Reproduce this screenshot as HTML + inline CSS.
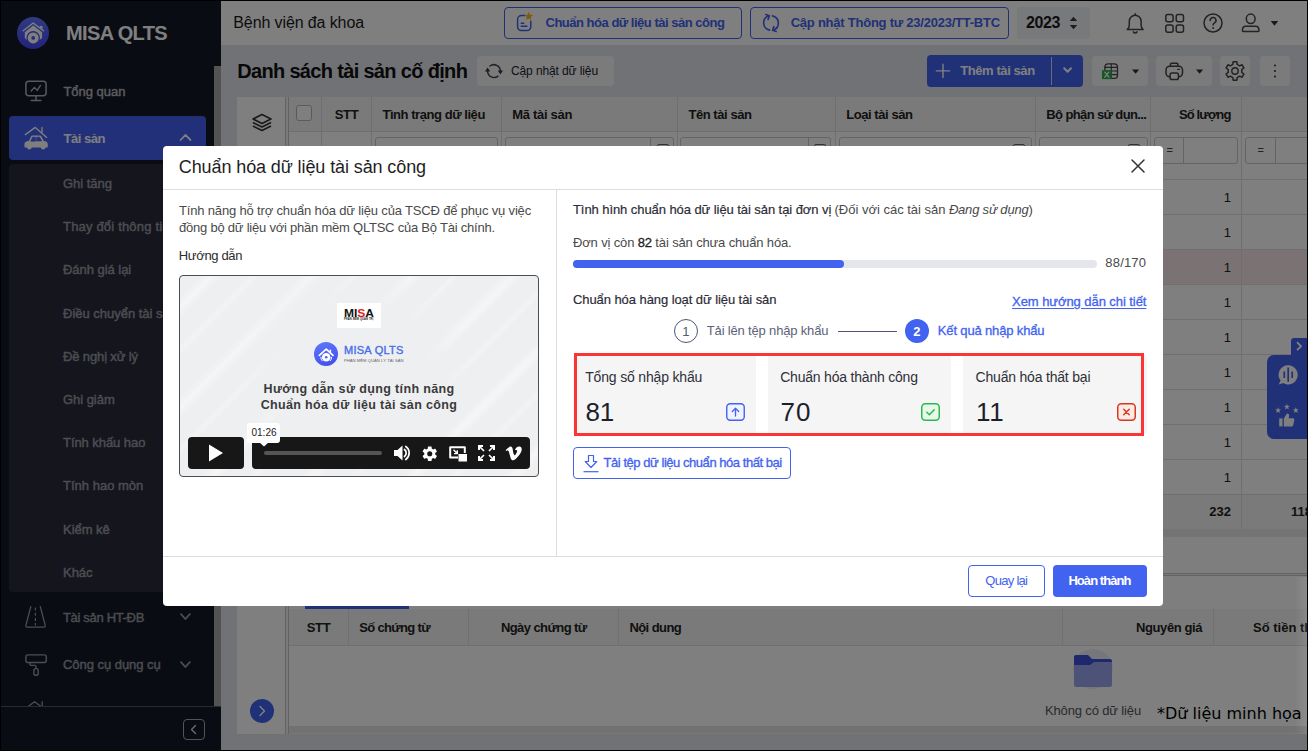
<!DOCTYPE html>
<html lang="vi"><head><meta charset="utf-8"><title>MISA QLTS</title>
<style>
html,body{margin:0;padding:0}
body{width:1308px;height:751px;background:#000;position:relative;overflow:hidden;font-family:"Liberation Sans",sans-serif;font-size:13px}
.r{position:absolute;box-sizing:border-box}
.t{position:absolute;white-space:nowrap}
#clip{position:absolute;left:1px;top:1px;width:1306px;height:749px;overflow:hidden}
#clip>.in{position:absolute;left:-1px;top:-1px;width:1308px;height:751px}
</style></head><body><div id="clip"><div class="in">
<div class="r" style="left:221px;top:1px;width:1086px;height:749px;background:#e2e4ea"></div>
<div class="r" style="left:221px;top:1px;width:1086px;height:44px;background:#ffffff"></div>
<div class="t" style="letter-spacing:-0.109px;left:233.30px;top:12px;font-size:16px;line-height:21px;color:#1a1a1a">Bệnh viện đa khoa</div>
<div class="r" style="left:504px;top:7px;width:238px;height:32px;border:1px solid #4262f0;border-radius:4px"></div>
<div class="t" style="letter-spacing:-0.490px;left:545.50px;top:13px;font-size:13px;line-height:19px;font-weight:700;color:#4262f0">Chuẩn hóa dữ liệu tài sản công</div>
<div class="r" style="left:750px;top:7px;width:259px;height:32px;border:1px solid #4262f0;border-radius:4px"></div>
<div class="t" style="letter-spacing:-0.235px;left:790.70px;top:13px;font-size:13px;line-height:19px;font-weight:700;color:#4262f0">Cập nhật Thông tư 23/2023/TT-BTC</div>
<div class="r" style="left:1017px;top:7px;width:73px;height:32px;background:#f1f2f4;border-radius:4px"></div>
<div class="t" style="letter-spacing:-0.398px;left:1026.00px;top:12px;font-size:16px;line-height:21px;font-weight:700;color:#1a1a1a">2023</div>
<div class="t" style="letter-spacing:-0.669px;left:237.20px;top:58px;font-size:20px;line-height:26px;font-weight:700;color:#111">Danh sách tài sản cố định</div>
<div class="r" style="left:477px;top:56px;width:137px;height:30px;background:#f6f7f9;border-radius:4px"></div>
<div class="t" style="letter-spacing:-0.110px;left:511.00px;top:62px;font-size:12px;line-height:18px;color:#1c1c2e">Cập nhật dữ liệu</div>
<div class="r" style="left:927px;top:55px;width:156px;height:32px;background:#4262f0;border-radius:4px"></div>
<div class="r" style="left:1051px;top:57px;width:1px;height:28px;background:#ffffff;opacity:.75"></div>
<div class="t" style="letter-spacing:-0.414px;left:960.20px;top:61px;font-size:13px;line-height:19px;font-weight:700;color:#fff">Thêm tài sản</div>
<div class="r" style="left:1092px;top:56px;width:56px;height:30px;background:#f6f7f9;border-radius:4px"></div>
<div class="r" style="left:1156px;top:56px;width:56px;height:30px;background:#f6f7f9;border-radius:4px"></div>
<div class="r" style="left:1220px;top:56px;width:30px;height:30px;background:#f6f7f9;border-radius:4px"></div>
<div class="r" style="left:1260px;top:56px;width:30px;height:30px;background:#f6f7f9;border-radius:4px"></div>
<div class="r" style="left:237px;top:97px;width:48px;height:637px;background:#ffffff"></div>
<div class="r" style="left:285px;top:97px;width:4px;height:637px;background:#f4f4f4;border-left:1px solid #c4c4c4;border-right:1px solid #c4c4c4"></div>
<div class="r" style="left:289px;top:97px;width:1018px;height:440px;background:#ffffff"></div>
<div class="r" style="left:289px;top:97px;width:1018px;height:35px;background:#f5f5f5;border-bottom:1px solid #dedede"></div>
<div class="r" style="left:321px;top:97px;width:1px;height:432px;background:#dedede"></div>
<div class="r" style="left:371px;top:97px;width:1px;height:432px;background:#dedede"></div>
<div class="r" style="left:501px;top:97px;width:1px;height:432px;background:#dedede"></div>
<div class="r" style="left:677px;top:97px;width:1px;height:432px;background:#dedede"></div>
<div class="r" style="left:835px;top:97px;width:1px;height:432px;background:#dedede"></div>
<div class="r" style="left:1035px;top:97px;width:1px;height:432px;background:#dedede"></div>
<div class="r" style="left:1150px;top:97px;width:1px;height:432px;background:#dedede"></div>
<div class="r" style="left:1241px;top:97px;width:1px;height:432px;background:#dedede"></div>
<div class="r" style="left:289px;top:250px;width:1018px;height:34px;background:#f7e6e6"></div>
<div class="r" style="left:289px;top:179px;width:1018px;height:1px;background:#dedede"></div>
<div class="r" style="left:289px;top:214px;width:1018px;height:1px;background:#dedede"></div>
<div class="r" style="left:289px;top:249px;width:1018px;height:1px;background:#dedede"></div>
<div class="r" style="left:289px;top:284px;width:1018px;height:1px;background:#dedede"></div>
<div class="r" style="left:289px;top:319px;width:1018px;height:1px;background:#dedede"></div>
<div class="r" style="left:289px;top:354px;width:1018px;height:1px;background:#dedede"></div>
<div class="r" style="left:289px;top:389px;width:1018px;height:1px;background:#dedede"></div>
<div class="r" style="left:289px;top:424px;width:1018px;height:1px;background:#dedede"></div>
<div class="r" style="left:289px;top:459px;width:1018px;height:1px;background:#dedede"></div>
<div class="r" style="left:289px;top:494px;width:1018px;height:1px;background:#dedede"></div>
<div class="r" style="left:1241px;top:180px;width:1px;height:349px;background:#dedede"></div>
<div class="r" style="left:289px;top:495px;width:1018px;height:34px;background:#f5f5f5"></div>
<div class="r" style="left:1150px;top:495px;width:1px;height:34px;background:#dedede"></div>
<div class="r" style="left:1241px;top:495px;width:1px;height:34px;background:#dedede"></div>
<div class="r" style="left:289px;top:529px;width:1018px;height:8px;background:#e8e8e8"></div>
<div class="t" style="right:77.00px;top:188px;font-size:13px;line-height:19px;color:#222">1</div>
<div class="t" style="right:77.00px;top:223px;font-size:13px;line-height:19px;color:#222">1</div>
<div class="t" style="right:77.00px;top:258px;font-size:13px;line-height:19px;color:#222">1</div>
<div class="t" style="right:77.00px;top:293px;font-size:13px;line-height:19px;color:#222">1</div>
<div class="t" style="right:77.00px;top:328px;font-size:13px;line-height:19px;color:#222">1</div>
<div class="t" style="right:77.00px;top:363px;font-size:13px;line-height:19px;color:#222">1</div>
<div class="t" style="right:77.00px;top:398px;font-size:13px;line-height:19px;color:#222">1</div>
<div class="t" style="right:77.00px;top:433px;font-size:13px;line-height:19px;color:#222">1</div>
<div class="t" style="right:77.00px;top:468px;font-size:13px;line-height:19px;color:#222">1</div>
<div class="t" style="right:77.00px;top:502px;font-size:13px;line-height:19px;font-weight:700;color:#222">232</div>
<div class="t" style="left:1291.00px;top:502px;font-size:13px;line-height:19px;font-weight:700;color:#222">118</div>
<div class="r" style="left:296px;top:105px;width:16px;height:16px;background:#fff;border:1px solid #b5b5b5;border-radius:3px"></div>
<div class="t" style="letter-spacing:-0.317px;left:334.70px;top:105px;font-size:13px;line-height:19px;font-weight:700;color:#222">STT</div>
<div class="t" style="letter-spacing:-0.446px;left:382.40px;top:105px;font-size:13px;line-height:19px;font-weight:700;color:#222">Tình trạng dữ liệu</div>
<div class="t" style="letter-spacing:-0.296px;left:512.20px;top:105px;font-size:13px;line-height:19px;font-weight:700;color:#222">Mã tài sản</div>
<div class="t" style="letter-spacing:-0.437px;left:688.40px;top:105px;font-size:13px;line-height:19px;font-weight:700;color:#222">Tên tài sản</div>
<div class="t" style="letter-spacing:-0.435px;left:846.20px;top:105px;font-size:13px;line-height:19px;font-weight:700;color:#222">Loại tài sản</div>
<div class="t" style="letter-spacing:-0.619px;left:1046.30px;top:105px;font-size:13px;line-height:19px;font-weight:700;color:#222">Bộ phận sử dụn...</div>
<div class="t" style="letter-spacing:-0.847px;left:1178.90px;top:105px;font-size:13px;line-height:19px;font-weight:700;color:#222">Số lượng</div>
<div class="r" style="left:375px;top:137px;width:123px;height:27px;background:#fff;border:1px solid #c8c8c8;border-radius:3px"></div>
<div class="r" style="left:505px;top:137px;width:169px;height:27px;background:#fff;border:1px solid #c8c8c8;border-radius:3px"></div>
<div class="r" style="left:650px;top:137px;width:1px;height:27px;background:#c8c8c8"></div>
<div class="r" style="left:680px;top:137px;width:151px;height:27px;background:#fff;border:1px solid #c8c8c8;border-radius:3px"></div>
<div class="r" style="left:808px;top:137px;width:1px;height:27px;background:#c8c8c8"></div>
<div class="r" style="left:839px;top:137px;width:193px;height:27px;background:#fff;border:1px solid #c8c8c8;border-radius:3px"></div>
<div class="r" style="left:1039px;top:137px;width:109px;height:27px;background:#fff;border:1px solid #c8c8c8;border-radius:3px"></div>
<div class="r" style="left:1154px;top:137px;width:84px;height:27px;background:#fff;border:1px solid #c8c8c8;border-radius:3px"></div>
<div class="r" style="left:1183px;top:137px;width:1px;height:27px;background:#c8c8c8"></div>
<div class="r" style="left:1245px;top:137px;width:85px;height:27px;background:#fff;border:1px solid #c8c8c8;border-radius:3px"></div>
<div class="r" style="left:1275px;top:137px;width:1px;height:27px;background:#c8c8c8"></div>
<div class="t" style="left:1166.50px;top:142px;font-size:11px;line-height:16px;color:#444">=</div>
<div class="t" style="left:1257.50px;top:142px;font-size:11px;line-height:16px;color:#444">=</div>
<div class="r" style="left:657px;top:143.5px;width:12px;height:12.5px;border:1.5px solid #666;border-radius:2px"></div>
<div class="r" style="left:814px;top:143.5px;width:12px;height:12.5px;border:1.5px solid #666;border-radius:2px"></div>
<div class="r" style="left:1013px;top:143.5px;width:12px;height:12.5px;border:1.5px solid #666;border-radius:2px"></div>
<div class="r" style="left:1128px;top:143.5px;width:12px;height:12.5px;border:1.5px solid #666;border-radius:2px"></div>
<svg class="r" style="left:250px;top:111px;" width="24" height="24" viewBox="0 0 24 24" fill="none"><path d="M12 3.5 21 8l-9 4.5L3 8z M3.5 11.8 12 16l8.500-4.200 M3.500 15.300 12 19.500l8.500-4.200" stroke="#333" stroke-width="1.600" stroke-linejoin="round" stroke-linecap="round"/></svg>
<div class="r" style="left:289px;top:537px;width:1018px;height:36px;background:#fdfdfd"></div>
<div class="r" style="left:289px;top:573px;width:1018px;height:3px;background:#f0f0f0;border-top:1px solid #c6c6c6;border-bottom:1px solid #c6c6c6"></div>
<div class="r" style="left:289px;top:576px;width:1018px;height:33px;background:#fcfcfc"></div>
<div class="r" style="left:305px;top:606px;width:104px;height:3px;background:#4262f0"></div>
<div class="r" style="left:289px;top:609px;width:1018px;height:37px;background:#f5f5f5;border-bottom:1px solid #dedede"></div>
<div class="r" style="left:289px;top:646px;width:1018px;height:80px;background:#ffffff"></div>
<div class="r" style="left:289px;top:726px;width:1018px;height:7px;background:#e4e4e4"></div>
<div class="r" style="left:289px;top:733px;width:1018px;height:1px;background:#f2f2f2"></div>
<div class="r" style="left:348px;top:609px;width:1px;height:36px;background:#e2e2e2"></div>
<div class="r" style="left:468px;top:609px;width:1px;height:36px;background:#e2e2e2"></div>
<div class="r" style="left:618px;top:609px;width:1px;height:36px;background:#e2e2e2"></div>
<div class="r" style="left:1062px;top:609px;width:1px;height:36px;background:#e2e2e2"></div>
<div class="r" style="left:1213px;top:609px;width:1px;height:36px;background:#e2e2e2"></div>
<div class="t" style="letter-spacing:-0.317px;left:306.70px;top:618px;font-size:13px;line-height:19px;font-weight:700;color:#222">STT</div>
<div class="t" style="letter-spacing:-0.668px;left:359.20px;top:618px;font-size:13px;line-height:19px;font-weight:700;color:#222">Số chứng từ</div>
<div class="t" style="letter-spacing:-0.571px;left:500.90px;top:618px;font-size:13px;line-height:19px;font-weight:700;color:#222">Ngày chứng từ</div>
<div class="t" style="letter-spacing:-0.564px;left:629.40px;top:618px;font-size:13px;line-height:19px;font-weight:700;color:#222">Nội dung</div>
<div class="t" style="letter-spacing:-0.406px;left:1136.00px;top:618px;font-size:13px;line-height:19px;font-weight:700;color:#222">Nguyên giá</div>
<div class="t" style="left:1253.00px;top:618px;font-size:13px;line-height:19px;font-weight:700;color:#222">Số tiền thu</div>
<div class="t" style="letter-spacing:-0.145px;left:1045.00px;top:701px;font-size:13px;line-height:19px;color:#555">Không có dữ liệu</div>
<div class="r" style="left:1073px;top:649px;width:40px;height:40px;background:#eceef8;border-radius:20px"></div>
<svg class="r" style="left:1074px;top:655px;" width="38" height="32" viewBox="0 0 38 32" fill="none"><path d="M0 2a2 2 0 0 1 2-2h12l4 4h18a2 2 0 0 1 2 2v6H0z" fill="#3f51d8"/><path d="M0 10h16l4-3h18v23a2 2 0 0 1-2 2H2a2 2 0 0 1-2-2z" fill="#9aa6ee"/></svg>
<div class="r" style="left:250px;top:699px;width:24px;height:24px;background:#4262f0;border-radius:12px"></div>
<svg class="r" style="left:250px;top:699px;" width="24" height="24" viewBox="0 0 24 24" fill="none"><path d="M10 7.500l4.500 4.500-4.500 4.500" stroke="#fff" stroke-width="1.400" stroke-linecap="round" stroke-linejoin="round"/></svg>
<div class="r" style="left:1291px;top:338px;width:19px;height:17px;background:#4560f2;border-radius:3px 0 0 0"></div>
<svg class="r" style="left:1292px;top:339px;" width="14" height="14" viewBox="0 0 14 14" fill="none"><path d="M5 3l4 4-4 4" stroke="#fff" stroke-width="1.500"/></svg>
<div class="r" style="left:1267px;top:355px;width:45px;height:84px;background:#4262f0;border-radius:7px 0 0 7px"></div>
<div class="r" style="left:1px;top:1px;width:220px;height:749px;background:#141829"></div>
<div class="r" style="left:214px;top:66px;width:7px;height:640px;background:#a6a6a6"></div>
<div class="r" style="left:17px;top:17px;width:32px;height:32px;background:linear-gradient(180deg,#6076ff,#4646fa);border-radius:16px"></div>
<div class="t" style="letter-spacing:-0.629px;left:66.00px;top:20px;font-size:20px;line-height:26px;font-weight:700;color:#ffffff">MISA QLTS</div>
<div class="t" style="letter-spacing:-0.018px;left:63.40px;top:82px;font-size:13px;line-height:19px;-webkit-text-stroke:0.45px #b8b8bc;color:#b8b8bc">Tổng quan</div>
<div class="r" style="left:9px;top:116px;width:197px;height:44px;background:#4560f2;border-radius:4px"></div>
<div class="t" style="letter-spacing:-0.456px;left:63.40px;top:129px;font-size:13px;line-height:19px;font-weight:700;color:#ffffff">Tài sản</div>
<div class="r" style="left:9px;top:164px;width:197px;height:428px;background:rgba(255,255,255,.085);border-radius:4px"></div>
<div class="t" style="letter-spacing:-0.018px;left:63.00px;top:174px;font-size:13px;line-height:19px;-webkit-text-stroke:0.45px #9a9aa2;color:#9a9aa2">Ghi tăng</div>
<div class="t" style="letter-spacing:0.186px;left:63.00px;top:217px;font-size:13px;line-height:19px;-webkit-text-stroke:0.45px #9a9aa2;color:#9a9aa2">Thay đổi thông tin</div>
<div class="t" style="letter-spacing:-0.038px;left:63.00px;top:260px;font-size:13px;line-height:19px;-webkit-text-stroke:0.45px #9a9aa2;color:#9a9aa2">Đánh giá lại</div>
<div class="t" style="letter-spacing:-0.009px;left:63.00px;top:304px;font-size:13px;line-height:19px;-webkit-text-stroke:0.45px #9a9aa2;color:#9a9aa2">Điều chuyển tài sản</div>
<div class="t" style="letter-spacing:-0.132px;left:63.00px;top:347px;font-size:13px;line-height:19px;-webkit-text-stroke:0.45px #9a9aa2;color:#9a9aa2">Đề nghị xử lý</div>
<div class="t" style="letter-spacing:-0.040px;left:63.00px;top:390px;font-size:13px;line-height:19px;-webkit-text-stroke:0.45px #9a9aa2;color:#9a9aa2">Ghi giảm</div>
<div class="t" style="letter-spacing:-0.063px;left:63.00px;top:433px;font-size:13px;line-height:19px;-webkit-text-stroke:0.45px #9a9aa2;color:#9a9aa2">Tính khấu hao</div>
<div class="t" style="letter-spacing:0.007px;left:63.00px;top:476px;font-size:13px;line-height:19px;-webkit-text-stroke:0.45px #9a9aa2;color:#9a9aa2">Tính hao mòn</div>
<div class="t" style="letter-spacing:-0.037px;left:63.00px;top:520px;font-size:13px;line-height:19px;-webkit-text-stroke:0.45px #9a9aa2;color:#9a9aa2">Kiểm kê</div>
<div class="t" style="letter-spacing:-0.032px;left:63.00px;top:563px;font-size:13px;line-height:19px;-webkit-text-stroke:0.45px #9a9aa2;color:#9a9aa2">Khác</div>
<div class="t" style="letter-spacing:-0.326px;left:63.00px;top:608px;font-size:13px;line-height:19px;-webkit-text-stroke:0.45px #98989e;color:#98989e">Tài sản HT-ĐB</div>
<div class="t" style="letter-spacing:-0.039px;left:63.00px;top:655px;font-size:13px;line-height:19px;-webkit-text-stroke:0.45px #98989e;color:#98989e">Công cụ dụng cụ</div>
<svg class="r" style="left:0;top:0" width="1308" height="751" viewBox="0 0 1308 751" fill="none"><path d="M525 15.600h-3.600a3.800 3.800 0 0 0-3.800 3.800v7.400a3.800 3.800 0 0 0 3.800 3.800h5.600a3.800 3.800 0 0 0 3.800-3.800v-5.600" stroke="#4262f0" stroke-width="1.5" fill="none" stroke-linecap="round" stroke-linejoin="round" /><path d="M521.300 23.200h2.400M521.300 26.200h5.600" stroke="#4262f0" stroke-width="1.6" fill="none" stroke-linecap="round" stroke-linejoin="round" /><path d="M528.80 11.80L530.03 14.70L533.17 14.98L530.80 17.05L531.50 20.12L528.80 18.50L526.10 20.12L526.80 17.05L524.43 14.98L527.57 14.70z" fill="#ffb31a"/><path d="M769.600 30.100A7.300 7.300 0 0 1 768.400 16.100" stroke="#4262f0" stroke-width="1.6" fill="none" stroke-linecap="round" stroke-linejoin="round" /><path d="M765.800 14.600l3.600 1.200-1.300 3.600" stroke="#4262f0" stroke-width="1.6" fill="none" stroke-linecap="round" stroke-linejoin="round" /><path d="M772.400 15.900A7.300 7.300 0 0 1 773.600 29.900" stroke="#4262f0" stroke-width="1.6" fill="none" stroke-linecap="round" stroke-linejoin="round" /><path d="M776.200 31.400l-3.600-1.200 1.300-3.600" stroke="#4262f0" stroke-width="1.6" fill="none" stroke-linecap="round" stroke-linejoin="round" /><path d="M1069.800 21.100l3.700-4.300 3.700 4.300zM1069.800 24.900l3.700 4.300 3.700-4.300z" fill="#3a3a3a"/><path d="M1127.300 29.600c1.300-1.200 2-2.600 2-4.600v-3.800a5.900 5.900 0 0 1 11.800 0v3.800c0 2 .700 3.400 2 4.600z" stroke="#464646" stroke-width="1.5" fill="none" stroke-linecap="round" stroke-linejoin="round" /><path d="M1133.400 31.900a2 2 0 0 0 3.600 0M1135.200 13.800v1.400" stroke="#464646" stroke-width="1.5" fill="none" stroke-linecap="round" stroke-linejoin="round" /><rect x="1165.8" y="14.5" width="7.300" height="7.300" rx="2" stroke="#464646" stroke-width="1.500"/><rect x="1165.8" y="24.9" width="7.300" height="7.300" rx="2" stroke="#464646" stroke-width="1.500"/><rect x="1176.2" y="14.5" width="7.300" height="7.300" rx="2" stroke="#464646" stroke-width="1.500"/><rect x="1176.2" y="24.9" width="7.300" height="7.300" rx="2" stroke="#464646" stroke-width="1.500"/><circle cx="1213" cy="23" r="9" stroke="#464646" stroke-width="1.500"/><path d="M1210.200 20.400a2.900 2.900 0 1 1 4.300 2.500c-.900.500-1.400 1.100-1.400 2.200" stroke="#464646" stroke-width="1.5" fill="none" stroke-linecap="round" stroke-linejoin="round" /><circle cx="1213.100" cy="27.900" r="1" fill="#464646"/><ellipse cx="1250.700" cy="18.800" rx="4.400" ry="4.700" stroke="#464646" stroke-width="1.500"/><path d="M1245.600 26.200h10.200c2 0 3.200 2.100 3.200 4.300 0 .800-.600 1.100-1.300 1.100h-14c-.700 0-1.300-.300-1.300-1.100 0-2.200 1.200-4.300 3.200-4.300z" stroke="#464646" stroke-width="1.5" fill="none" stroke-linecap="round" stroke-linejoin="round" /><path d="M1270.700 20.900h7.600l-3.800 4.900z" fill="#2f3140"/><path d="M490 66A6.500 6.500 0 0 1 500.400 71" stroke="#444444" stroke-width="1.5" fill="none" stroke-linecap="round" stroke-linejoin="round" /><path d="M498 76.200A6.500 6.500 0 0 1 487.600 71.200" stroke="#444444" stroke-width="1.5" fill="none" stroke-linecap="round" stroke-linejoin="round" /><path d="M497.800 70.600h5.200l-2.600 4z" fill="#3a3a3a"/><path d="M485 71.400h5.200l-2.600-4z" fill="#3a3a3a"/><path d="M936.400 70.900h13.200M943 64.300v13.200" stroke="#fff" stroke-width="1.4" fill="none" stroke-linecap="round" stroke-linejoin="round" /><path d="M1064.200 68.300l3.400 3.400 3.400-3.400" stroke="#fff" stroke-width="2" fill="none" stroke-linecap="round" stroke-linejoin="round" /><rect x="1104.900" y="63.800" width="12.600" height="14.600" rx="3.200" stroke="#444444" stroke-width="1.300"/><path d="M1105 67.400h12.400M1105 71h12.400M1105 74.600h12.400M1111.300 64v14.200" stroke="#444444" stroke-width="1.1" fill="none" stroke-linecap="round" stroke-linejoin="round" /><rect x="1102" y="70.200" width="9.700" height="8.900" fill="#2cae50"/><path d="M1104.800 72.200l4 5M1108.800 72.200l-4 5" stroke="#fff" stroke-width="1.3" fill="none" stroke-linecap="round" stroke-linejoin="round" /><path d="M1132 69.400h7.200l-3.600 4.300z" fill="#2f3140"/><rect x="1166" y="66.200" width="16.500" height="10.600" rx="3.800" stroke="#444444" stroke-width="1.500"/><path d="M1170.500 66v-1.700a1 1 0 0 1 1-1h5.400a1 1 0 0 1 1 1v1.700" stroke="#444444" stroke-width="1.5" fill="none" stroke-linecap="round" stroke-linejoin="round" /><rect x="1170.100" y="73" width="8.300" height="6.500" rx="1.800" fill="#fdfdfe" stroke="#444444" stroke-width="1.500"/><path d="M1177.700 69.300h1.700" stroke="#444444" stroke-width="1.3" fill="none" stroke-linecap="round" stroke-linejoin="round" /><path d="M1196 69.400h7.200l-3.600 4.300z" fill="#2f3140"/><path d="M1237.20 77.54L1236.86 80.21L1233.14 80.21L1232.80 77.54L1230.44 76.18L1227.95 77.22L1226.09 74.00L1228.24 72.36L1228.24 69.64L1226.09 68.00L1227.95 64.78L1230.44 65.82L1232.80 64.46L1233.14 61.79L1236.86 61.79L1237.20 64.46L1239.56 65.82L1242.05 64.78L1243.91 68.00L1241.76 69.64L1241.76 72.36L1243.91 74.00L1242.05 77.22L1239.56 76.18z" stroke="#444444" stroke-width="1.500" stroke-linejoin="round"/><circle cx="1235" cy="71" r="3.200" stroke="#444444" stroke-width="1.400"/><circle cx="1275" cy="65.5" r="1.050" fill="#3a3a3a"/><circle cx="1275" cy="71" r="1.050" fill="#3a3a3a"/><circle cx="1275" cy="76.5" r="1.050" fill="#3a3a3a"/><path d="M1297.600 343.200l3.600 3.300-3.600 3.300" stroke="#ffffff" stroke-width="1.4" fill="none" stroke-linecap="round" stroke-linejoin="round" /><path d="M1288.100 365.200a9.600 9.600 0 1 1-4.800 17.900l-4.600 1.400 1.900-3.900a9.600 9.600 0 0 1 7.500-15.400z" fill="#fff"/><path d="M1284.300 371.600v6.400M1288.200 367.400v14.400M1292.200 371.600v6.400" stroke="#4262f0" stroke-width="1.700"/><path d="M1278.10 407.30L1278.86 409.35L1281.05 409.44L1279.34 410.80L1279.92 412.91L1278.10 411.70L1276.28 412.91L1276.86 410.80L1275.15 409.44L1277.34 409.35z" fill="#fff"/><path d="M1286.90 403.80L1287.66 405.85L1289.85 405.94L1288.14 407.30L1288.72 409.41L1286.90 408.20L1285.08 409.41L1285.66 407.30L1283.95 405.94L1286.14 405.85z" fill="#fff"/><path d="M1295.80 407.30L1296.56 409.35L1298.75 409.44L1297.04 410.80L1297.62 412.91L1295.80 411.70L1293.98 412.91L1294.56 410.80L1292.85 409.44L1295.04 409.35z" fill="#fff"/><rect x="1279.200" y="418.400" width="3.300" height="8" fill="#fff"/><path d="M1283.800 418.600l3.200-5.200c1.600 0 2.400 1 2.100 2.500l-.500 2.300h4c1.300 0 2 .900 1.700 2.100l-1.100 4.600c-.300 1-1 1.500-2 1.500h-7.400z" fill="#fff"/><path d="M23.200 30.700 33.200 23l10.300 7.700" stroke="#fff" stroke-width="1.4" fill="none" stroke-linecap="round" stroke-linejoin="round" /><path d="M39.900 26h2.600v3.200l-2.600-2z" fill="#fff"/><path d="M24.800 32.300 33.200 25.600l8.900 6.700v5.800l-2.200 1.700H26.500l-1.700-1.700z" fill="#fff"/><circle cx="33.200" cy="37.900" r="6.800" fill="#4e58f4"/><circle cx="33.200" cy="37.900" r="5.500" fill="#fff"/><circle cx="33.200" cy="37.900" r="1.900" fill="#4e58f4"/><rect x="25.900" y="81.200" width="20.200" height="14.600" rx="3" stroke="#b2b2b6" stroke-width="1.500"/><path d="M36 96v4.500M31.300 100.600h9.600" stroke="#b2b2b6" stroke-width="1.5" fill="none" stroke-linecap="round" stroke-linejoin="round" /><path d="M31.200 91l3.300-3.600 2.700 3 3.300-5" stroke="#b2b2b6" stroke-width="1.4" fill="none" stroke-linecap="round" stroke-linejoin="round" /><path d="M25.300 134.600l10-7.200 11.400 10M42 127.500v5.500" stroke="#fff" stroke-width="1.3" fill="none" stroke-linecap="round" stroke-linejoin="round" /><g transform="translate(36 142.2) scale(1.07 1.1) translate(-36 -142.2)"><path d="M29.300 141.200l2-4.200c.300-.600.800-1 1.500-1h6.600c.700 0 1.200.300 1.600.900l2.300 4.200c2.400.200 3.700 1.200 3.700 3v1.900c0 .600-.400 1-1 1h-1.100a2.300 2.300 0 0 1-4.500 0h-8.300a2.300 2.300 0 0 1-4.500 0h-1.400c-.600 0-1-.400-1-1v-2c0-1.700 1.400-2.700 4.100-2.800z" fill="#fff"/><path d="M31.300 141l1.500-3.300h2.700v3.300zM36.800 137.700h2.600l1.800 3.300h-4.400z" stroke="#4560f2" stroke-width="0.7" fill="#4560f2" stroke-linecap="round" stroke-linejoin="round" /></g><path d="M180.600 140l4.900-5.100 5 5.100" stroke="#fff" stroke-width="1.8" fill="none" stroke-linecap="round" stroke-linejoin="round" /><path d="M181 614.200l4.400 4.800 4.400-4.800" stroke="#9c9ca0" stroke-width="1.8" fill="none" stroke-linecap="round" stroke-linejoin="round" /><path d="M181 662.200l4.400 4.800 4.400-4.800" stroke="#9c9ca0" stroke-width="1.8" fill="none" stroke-linecap="round" stroke-linejoin="round" /><path d="M30.800 606.700l-4.900 18.700c-.300 1 .300 1.800 1.300 1.800h16.700c1 0 1.600-.800 1.300-1.800l-4.900-18.700" stroke="#9c9ca0" stroke-width="1.3" fill="none" stroke-linecap="round" stroke-linejoin="round" /><path d="M35.400 607.500v18" stroke="#9c9ca0" stroke-width="1.200" stroke-dasharray="3 2.200"/><rect x="25.900" y="654.900" width="20.400" height="7.600" rx="2" stroke="#9c9ca0" stroke-width="1.400"/><path d="M30 662.800v1.400c0 .700.500 1.200 1.200 1.200h3.600c.700 0 1.200.500 1.200 1.200v1.500" stroke="#9c9ca0" stroke-width="1.4" fill="none" stroke-linecap="round" stroke-linejoin="round" /><rect x="33.900" y="668.600" width="4.300" height="6.600" rx="1.800" stroke="#9c9ca0" stroke-width="1.400"/><path d="M28.200 706.500l6.300-4.800 6.600 4.800M42.200 701.700v4.800" stroke="#9c9ca0" stroke-width="1.3" fill="none" stroke-linecap="round" stroke-linejoin="round" /></svg>
<div class="r" style="left:1px;top:706px;width:220px;height:44px;background:#141829;border-top:1px solid #55565c"></div>
<div class="r" style="left:183px;top:719px;width:22px;height:21px;border:1px solid #a8a8a8;border-radius:4px"></div>
<svg class="r" style="left:183px;top:719px;" width="22" height="21" viewBox="0 0 22 21" fill="none"><path d="M12.500 6.500l-4 4 4 4" stroke="#ddd" stroke-width="1.300" stroke-linecap="round" stroke-linejoin="round"/></svg>
<div class="r" style="left:1px;top:1px;width:1306px;height:749px;background:rgba(0,0,0,.5)"></div>
<div class="r" style="left:1295px;top:577px;width:12px;height:157px;background:linear-gradient(90deg,rgba(255,255,255,0),rgba(255,255,255,.10))"></div>
<div class="r" style="left:163px;top:146px;width:1000px;height:460px;background:#ffffff;border-radius:4px"></div>
<div class="r" style="left:163px;top:189px;width:1000px;height:1px;background:#dcdde3"></div>
<div class="r" style="left:163px;top:556px;width:1000px;height:1px;background:#dcdde3"></div>
<div class="r" style="left:556px;top:190px;width:1px;height:366px;background:#dcdde3"></div>
<div class="t" style="letter-spacing:-0.101px;left:178.80px;top:155px;font-size:18px;line-height:24px;color:#1f1f1f">Chuẩn hóa dữ liệu tài sản công</div>
<svg class="r" style="left:1130px;top:158px;" width="16" height="16" viewBox="0 0 16 16" fill="none"><path d="M2 2l12 12M14 2L2 14" stroke="#333" stroke-width="1.500" stroke-linecap="round"/></svg>
<div class="t" style="letter-spacing:-0.164px;left:179.00px;top:201px;font-size:13px;line-height:19px;color:#4a4a4a">Tính năng hỗ trợ chuẩn hóa dữ liệu của TSCĐ để phục vụ việc</div>
<div class="t" style="letter-spacing:-0.225px;left:179.00px;top:218px;font-size:13px;line-height:19px;color:#4a4a4a">đồng bộ dữ liệu với phần mềm QLTSC của Bộ Tài chính.</div>
<div class="t" style="letter-spacing:-0.342px;left:178.80px;top:246px;font-size:13px;line-height:19px;color:#2c2c2c">Hướng dẫn</div>
<div class="r" style="left:179px;top:275px;width:360px;height:202px;background:#eeeff1;border:1px solid #4d4d4d;border-radius:4px;overflow:hidden"><div style="position:absolute;left:-60px;top:-40px;width:520px;height:320px;background:repeating-linear-gradient(135deg,rgba(255,255,255,0) 0,rgba(255,255,255,0) 14px,rgba(255,255,255,.42) 22px,rgba(255,255,255,0) 30px,rgba(255,255,255,0) 47px,rgba(255,255,255,.25) 52px,rgba(255,255,255,0) 57px,rgba(255,255,255,0) 71px)"></div><div style="position:absolute;left:60px;top:-10px;width:230px;height:220px;background:radial-gradient(ellipse at center,#eeeff1 45%,rgba(238,239,241,0) 72%)"></div></div>
<div class="r" style="left:336.7px;top:302.8px;width:44.4px;height:25px;background:#ffffff"></div>
<div class="t" style="left:344px;top:306px;font-size:10.3px;line-height:15px;font-weight:700;color:#111;transform:scaleX(1.165);transform-origin:left">MI<span style="color:#e02020">S</span>A</div>
<div class="t" style="left:344px;top:318.2px;font-size:2.6px;line-height:4px;color:#222;font-weight:700;letter-spacing:.12px">PHẦN MỀM QUẢN TRỊ</div>
<div class="r" style="left:314px;top:341.5px;width:24.4px;height:24.4px;background:linear-gradient(160deg,#5f78ff,#3f4de8);border-radius:13px"></div>
<svg class="r" style="left:314px;top:341.5px;" width="24.4" height="24.4" viewBox="0 0 32 32" fill="none"><path d="M7 17.500 16 9.500l9 8" stroke="#fff" stroke-width="2.200" stroke-linecap="round" stroke-linejoin="round"/><path d="M21.500 10v3.500" stroke="#fff" stroke-width="2"/><circle cx="16" cy="20" r="5.600" fill="#fff"/><circle cx="16" cy="20" r="1.700" fill="#4a5cf0"/><path d="M9 19.500a7.200 7.200 0 0 0 2 5.500M23 19.500a7.200 7.200 0 0 1-2 5.500" stroke="#fff" stroke-width="1.300"/></svg>
<div class="t" style="letter-spacing:0.271px;left:344.00px;top:342px;font-size:11px;line-height:16px;-webkit-text-stroke:0.4px #4a6fe6;color:#4a6fe6">MISA QLTS</div>
<div class="t" style="letter-spacing:0.001px;left:344.00px;top:356px;font-size:4.2px;line-height:9px;color:#666">PHẦN MỀM QUẢN LÝ TÀI SẢN</div>
<div class="t" style="letter-spacing:0.369px;left:263.50px;top:380px;font-size:12.5px;line-height:18px;font-weight:700;color:#3a3a3a">Hướng dẫn sử dụng tính năng</div>
<div class="t" style="letter-spacing:0.345px;left:260.70px;top:396px;font-size:12.5px;line-height:18px;font-weight:700;color:#3a3a3a">Chuẩn hóa dữ liệu tài sản công</div>
<div class="r" style="left:188px;top:437px;width:56px;height:32px;background:#171717;border-radius:4px"></div>
<svg class="r" style="left:188px;top:437px;" width="56" height="32" viewBox="0 0 56 32" fill="none"><path d="M21 7.500v17l14-8.500z" fill="#fff"/></svg>
<div class="r" style="left:252px;top:437px;width:278px;height:32px;background:#171717;border-radius:4px"></div>
<div class="r" style="left:264px;top:451px;width:117.5px;height:4px;background:#555;border-radius:2px"></div>
<div class="r" style="left:247px;top:423.3px;width:33px;height:19.3px;background:#ffffff;border-radius:3px"></div>
<svg class="r" style="left:259px;top:442px;" width="10" height="5" viewBox="0 0 10 5" fill="none"><path d="M0 0h10L5 4.500z" fill="#fff"/></svg>
<div class="t" style="letter-spacing:-0.004px;left:251.50px;top:425px;font-size:10px;line-height:15px;color:#1a1a1a">01:26</div>
<svg class="r" style="left:393px;top:444px;" width="18" height="18" viewBox="0 0 18 18" fill="none"><path d="M1 6h3.500L9.500 1.500v15L4.500 12H1z" fill="#fff"/><path d="M11.500 5.500a4.500 4.500 0 0 1 0 7M12.800 2.500a8 8 0 0 1 0 13" stroke="#fff" stroke-width="1.700" stroke-linecap="round"/></svg>
<svg class="r" style="left:421px;top:444.5px;" width="17.5" height="17.5" viewBox="0 0 24 24" fill="none"><path fill="#fff" fill-rule="evenodd" d="M19.430 12.980c.040-.320.070-.640.070-.980s-.030-.660-.070-.980l2.110-1.650a.5.500 0 0 0 .120-.640l-2-3.460a.5.500 0 0 0-.610-.220l-2.490 1a7.300 7.300 0 0 0-1.690-.980l-.380-2.650A.49.490 0 0 0 14 2h-4a.49.490 0 0 0-.490.420l-.380 2.650c-.610.250-1.170.590-1.690.980l-2.490-1a.5.500 0 0 0-.610.220l-2 3.460a.5.500 0 0 0 .120.640l2.110 1.650c-.040.320-.070.650-.070.980s.030.660.070.980l-2.110 1.650a.5.500 0 0 0-.120.640l2 3.460c.120.220.390.300.610.220l2.490-1c.520.400 1.080.730 1.690.980l.380 2.650c.030.240.240.420.490.420h4c.250 0 .460-.180.490-.420l.380-2.650c.610-.250 1.170-.590 1.690-.980l2.490 1c.230.090.490 0 .610-.220l2-3.460a.5.500 0 0 0-.120-.640zM12 15.500A3.500 3.500 0 1 1 12 8.500a3.500 3.500 0 0 1 0 7z"/></svg>
<svg class="r" style="left:449px;top:446px;" width="18" height="15.5" viewBox="0 0 18 15.500" fill="none"><path d="M9 11.500H1.200V1.200h14.600V7" stroke="#fff" stroke-width="2" stroke-linejoin="round"/><rect x="9.500" y="8" width="8.500" height="7.500" fill="#fff"/><path d="M4.500 3.800l3.500 3.500M8.300 4.300v3.300H5" stroke="#fff" stroke-width="1.400"/></svg>
<svg class="r" style="left:478px;top:445px;" width="17" height="16" viewBox="0 0 17 16" fill="none"><path d="M1.500 1.500l4.500 4.500M15.500 1.500l-4.500 4.500M1.500 14.500l4.500-4.500M15.500 14.500l-4.500-4.500" stroke="#fff" stroke-width="1.700"/><path d="M1 5V1h4M12 1h4v4M1 11v4h4M12 15h4v-4" stroke="#fff" stroke-width="2"/></svg>
<svg class="r" style="left:505px;top:445.8px;" width="17.4" height="15" viewBox="0 0 24 22.4" fill="none"><path fill="#fff" d="M23.980 5.420c-.100 2.340-1.740 5.540-4.890 9.610-3.270 4.250-6.030 6.370-8.290 6.370-1.410 0-2.580-1.290-3.550-3.880L5.330 10.400C4.610 7.820 3.840 6.520 3.020 6.520c-.180 0-.810.380-1.880 1.130L.010 6.200a315 315 0 0 0 3.500-3.130C5.090 1.700 6.270.980 7.060.910c1.870-.180 3.020 1.100 3.450 3.840.460 2.950.790 4.790.970 5.510.540 2.450 1.130 3.670 1.780 3.670.500 0 1.260-.800 2.260-2.380 1-1.590 1.540-2.800 1.610-3.630.140-1.370-.400-2.060-1.610-2.060-.570 0-1.170.120-1.780.390C14.930 2.380 17.180.490 20.500.610c2.470.060 3.630 1.660 3.490 4.800z"/></svg>
<div class="t" style="letter-spacing:-0.072px;left:573.00px;top:200px;font-size:13px;line-height:19px;-webkit-text-stroke:0.18px #2c2c36;color:#2c2c36">Tình hình chuẩn hóa dữ liệu tài sản tại đơn vị</div>
<div class="t" style="letter-spacing:-0.006px;left:834.50px;top:200px;font-size:13px;line-height:19px;color:#4a4a4a">(Đối với các tài sản</div>
<div class="t" style="letter-spacing:-0.197px;left:948.90px;top:200px;font-size:13px;line-height:19px;font-style:italic;color:#4a4a4a">Đang sử dụng</div>
<div class="t" style="left:1028.60px;top:200px;font-size:13px;line-height:19px;color:#4a4a4a">)</div>
<div class="t" style="left:573px;top:233.00px;font-size:13px;line-height:19px;color:#4a4a4a;letter-spacing:-0.145px">Đơn vị còn <span style="color:#222;-webkit-text-stroke:.3px #222">82</span> tài sản chưa chuẩn hóa.</div>
<div class="r" style="left:573px;top:260px;width:524px;height:8px;background:#e4e6eb;border-radius:4px"></div>
<div class="r" style="left:573px;top:260px;width:271px;height:8px;background:#4262f0;border-radius:4px"></div>
<div class="t" style="letter-spacing:0.190px;left:1105.30px;top:253px;font-size:13px;line-height:19px;color:#4a4a4a">88/170</div>
<div class="t" style="letter-spacing:-0.075px;left:573.00px;top:290px;font-size:13px;line-height:19px;-webkit-text-stroke:0.18px #2c2c36;color:#2c2c36">Chuẩn hóa hàng loạt dữ liệu tài sản</div>
<div class="t" style="letter-spacing:-0.066px;left:1012.10px;top:292px;font-size:13px;line-height:19px;-webkit-text-stroke:0.3px #4262f0;color:#4262f0;text-decoration:underline;text-underline-offset:2px">Xem hướng dẫn chi tiết</div>
<div class="r" style="left:674px;top:319px;width:24px;height:24px;background:#fff;border:1px solid #4d5470;border-radius:12px"></div>
<div class="t" style="left:682.30px;top:322px;font-size:13px;line-height:19px;color:#555a70">1</div>
<div class="t" style="letter-spacing:-0.168px;left:706.80px;top:321px;font-size:13px;line-height:19px;color:#5c627a">Tải lên tệp nhập khẩu</div>
<div class="r" style="left:837.5px;top:331px;width:59.5px;height:1px;background:#4d5470"></div>
<div class="r" style="left:905px;top:319px;width:24px;height:24px;background:#4262f0;border-radius:12px"></div>
<div class="t" style="left:913.20px;top:322px;font-size:13px;line-height:19px;font-weight:700;color:#fff">2</div>
<div class="t" style="letter-spacing:-0.150px;left:937.80px;top:321px;font-size:13px;line-height:19px;-webkit-text-stroke:0.3px #4262f0;color:#4262f0">Kết quả nhập khẩu</div>
<div class="r" style="left:573px;top:355px;width:182.7px;height:78.5px;background:#f5f5f5;border-radius:3px"></div>
<div class="r" style="left:768px;top:355px;width:183px;height:78.5px;background:#f5f5f5;border-radius:3px"></div>
<div class="r" style="left:963px;top:355px;width:184px;height:78.5px;background:#f5f5f5;border-radius:3px"></div>
<div class="t" style="letter-spacing:-0.168px;left:585.20px;top:367px;font-size:14px;line-height:20px;color:#2f2f38">Tổng số nhập khẩu</div>
<div class="t" style="letter-spacing:-0.204px;left:780.20px;top:367px;font-size:14px;line-height:20px;color:#2f2f38">Chuẩn hóa thành công</div>
<div class="t" style="letter-spacing:-0.201px;left:975.60px;top:367px;font-size:14px;line-height:20px;color:#2f2f38">Chuẩn hóa thất bại</div>
<div class="t" style="letter-spacing:-0.309px;left:585.50px;top:395px;font-size:26px;line-height:34px;color:#1d1f2b">81</div>
<div class="t" style="letter-spacing:0.991px;left:780.60px;top:395px;font-size:26px;line-height:34px;color:#1d1f2b">70</div>
<div class="t" style="letter-spacing:0.755px;left:976.00px;top:395px;font-size:26px;line-height:34px;color:#1d1f2b">11</div>
<svg class="r" style="left:725.5px;top:403px;" width="19" height="18" viewBox="0 0 19 18" fill="none"><rect x=".75" y=".75" width="17.500" height="16.500" rx="3.500" fill="#f0f3ff" stroke="#4262f0" stroke-width="1.400"/><path d="M9.500 13V5.500M6.300 8.500l3.200-3.200 3.200 3.200" stroke="#4262f0" stroke-width="1.300" stroke-linecap="round" stroke-linejoin="round"/></svg>
<svg class="r" style="left:920.5px;top:403px;" width="19" height="18" viewBox="0 0 19 18" fill="none"><rect x=".75" y=".75" width="17.500" height="16.500" rx="3.500" fill="#e6f8ea" stroke="#2fb84f" stroke-width="1.500"/><path d="M5.800 9.200l2.600 2.600 4.800-5" stroke="#2fb84f" stroke-width="1.500" stroke-linecap="round" stroke-linejoin="round"/></svg>
<svg class="r" style="left:1116.5px;top:403px;" width="19" height="18" viewBox="0 0 19 18" fill="none"><rect x=".75" y=".75" width="17.500" height="16.500" rx="3.500" fill="#fdeae6" stroke="#d8391c" stroke-width="1.500"/><path d="M6.800 6.300l5.400 5.400M12.200 6.300l-5.400 5.400" stroke="#d8391c" stroke-width="1.500" stroke-linecap="round"/></svg>
<div class="r" style="left:573px;top:447px;width:218px;height:32px;background:#fff;border:1px solid #4262f0;border-radius:4px"></div>
<svg class="r" style="left:583px;top:454px;" width="16" height="19" viewBox="0 0 16 19" fill="none"><path d="M5.500 1.500h5v6h3.300L8 13.500 2.200 7.500h3.300z" stroke="#4262f0" stroke-width="1.200" stroke-linejoin="round"/><path d="M.5 17.700h15" stroke="#4262f0" stroke-width="1.200"/></svg>
<div class="t" style="letter-spacing:-0.457px;left:603.60px;top:453px;font-size:13px;line-height:19px;-webkit-text-stroke:0.3px #4262f0;color:#4262f0">Tải tệp dữ liệu chuẩn hóa thất bại</div>
<div class="r" style="left:968px;top:565px;width:77px;height:32px;background:#fff;border:1px solid #4262f0;border-radius:4px"></div>
<div class="t" style="letter-spacing:-0.711px;left:985.30px;top:571px;font-size:13px;line-height:19px;color:#4262f0">Quay lại</div>
<div class="r" style="left:1053px;top:565px;width:94px;height:32px;background:#4262f0;border-radius:4px"></div>
<div class="t" style="letter-spacing:-0.939px;left:1068.40px;top:571px;font-size:13px;line-height:19px;font-weight:700;color:#fff">Hoàn thành</div>
<div class="r" style="left:574px;top:353px;width:570px;height:83px;border:3px solid #fb3535"></div>
<div class="t" style="left:1157.00px;top:702px;font-size:16px;line-height:23px;color:#000;font-family:'DejaVu Sans',sans-serif">*Dữ liệu minh họa</div>
</div></div></body></html>
